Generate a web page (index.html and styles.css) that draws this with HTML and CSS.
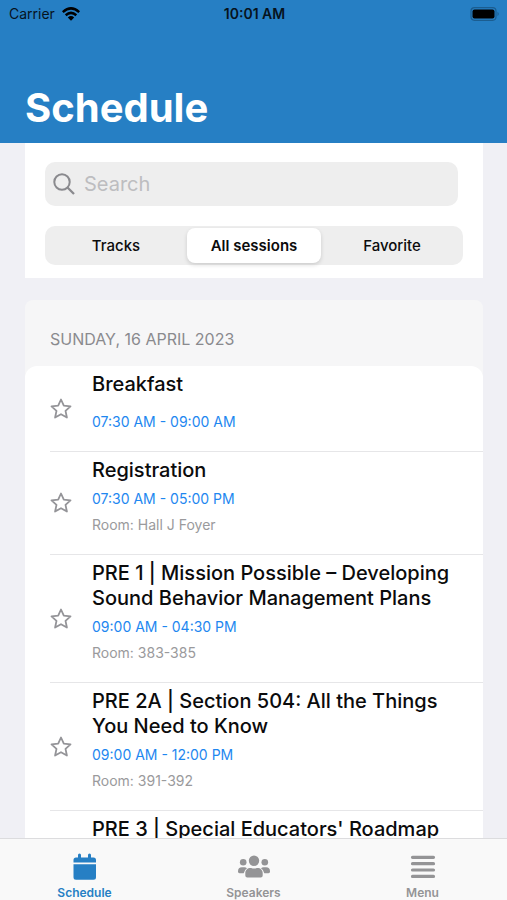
FILE: index.html
```
<!DOCTYPE html>
<html lang="en">
<head>
<meta charset="utf-8">
<meta name="viewport" content="width=device-width, initial-scale=1">
<title>Schedule</title>
<link rel="stylesheet" href="styles.css">
</head>
<body>
<svg class="sprite" aria-hidden="true">
  <symbol id="star" viewBox="0 0 22 22">
    <path d="M11 1.500l2.800 6.200 6.700.7-5 4.500 1.400 6.600L11 16.200l-5.900 3.300 1.400-6.600-5-4.500 6.700-.7z" fill="none" stroke="#949498" stroke-width="1.800" stroke-linejoin="round"/>
  </symbol>
</svg>
<div class="app">
  <header class="header">
    <div class="status">
      <div class="carrier">
        <span>Carrier</span>
        <svg class="wifi" viewBox="0 0 18 14" aria-hidden="true">
          <path d="M.8 5.100Q9-2.300 17.200 5.100M3.700 8.200Q9 3.500 14.300 8.200" fill="none" stroke="#000" stroke-width="2.500"/>
          <path d="M9 13.800L5.800 10.500Q9 7.700 12.200 10.500z" fill="#000"/>
        </svg>
      </div>
      <span class="clock">10:01 AM</span>
      <svg class="battery" viewBox="0 0 30 14" aria-hidden="true">
        <rect x="1" y=".7" width="25" height="12.600" rx="3.500" fill="none" stroke="#1b5d90" stroke-width="1.200"/>
        <rect x="2.500" y="2.400" width="22" height="9.200" rx="2" fill="#000"/>
        <path d="M27.500 4.800Q30 7 27.500 9.200z" fill="#1b5d90"/>
      </svg>
    </div>
    <h1 class="heading">Schedule</h1>
  </header>

  <main class="content">
    <section class="filters">
      <label class="search">
        <svg class="search-icon" viewBox="0 0 22 22" aria-hidden="true">
          <circle cx="9" cy="9" r="7.700" fill="none" stroke="#8a8a8e" stroke-width="2"/>
          <path d="M14.500 14.500L21 21" stroke="#8a8a8e" stroke-width="2.300"/>
        </svg>
        <input class="search-input" type="text" placeholder="Search" aria-label="Search">
      </label>
      <div class="segments">
        <button class="segment" type="button">Tracks</button>
        <button class="segment selected" type="button">All sessions</button>
        <button class="segment" type="button">Favorite</button>
      </div>
    </section>

    <section class="day">
      <h2 class="date">SUNDAY, 16 APRIL 2023</h2>
      <ul class="sessions">
        <li class="session">
          <button class="favorite" type="button" aria-label="Favorite"><svg class="star"><use href="#star"/></svg></button>
          <div class="details no-room">
            <h3 class="title">Breakfast</h3>
            <p class="time">07:30 AM - 09:00 AM</p>
          </div>
        </li>
        <li class="session">
          <button class="favorite" type="button" aria-label="Favorite"><svg class="star"><use href="#star"/></svg></button>
          <div class="details">
            <h3 class="title">Registration</h3>
            <p class="time">07:30 AM - 05:00 PM</p>
            <p class="room">Room: Hall J Foyer</p>
          </div>
        </li>
        <li class="session">
          <button class="favorite" type="button" aria-label="Favorite"><svg class="star"><use href="#star"/></svg></button>
          <div class="details">
            <h3 class="title">PRE 1 | Mission Possible – Developing Sound Behavior Management Plans</h3>
            <p class="time">09:00 AM - 04:30 PM</p>
            <p class="room">Room: 383-385</p>
          </div>
        </li>
        <li class="session">
          <button class="favorite" type="button" aria-label="Favorite"><svg class="star"><use href="#star"/></svg></button>
          <div class="details">
            <h3 class="title">PRE 2A | Section 504: All the Things You Need to Know</h3>
            <p class="time">09:00 AM - 12:00 PM</p>
            <p class="room">Room: 391-392</p>
          </div>
        </li>
        <li class="session">
          <div class="favorite"></div>
          <div class="details">
            <h3 class="title">PRE 3 | Special Educators' Roadmap</h3>
          </div>
        </li>
      </ul>
    </section>
  </main>

  <nav class="tabs">
    <a class="tab active" href="#schedule">
      <svg class="tab-icon" viewBox="0 0 32 28" aria-hidden="true">
        <path d="M4.500 9.500V7a2.500 2.500 0 0 1 2.500-2.500h2V2a1.500 1.500 0 0 1 3 0v2.500h7V2a1.500 1.500 0 0 1 3 0v2.500h2.500A2.500 2.500 0 0 1 27 7v2.500zM4.500 11.200H27v13A2.500 2.500 0 0 1 24.500 26.700H7a2.500 2.500 0 0 1-2.500-2.500z" fill="currentColor"/>
      </svg>
      <span>Schedule</span>
    </a>
    <a class="tab" href="#speakers">
      <svg class="tab-icon" viewBox="0 0 32 28" aria-hidden="true">
        <g fill="currentColor">
          <circle cx="16" cy="7.700" r="5.200"/>
          <circle cx="5.200" cy="9.200" r="3.300"/>
          <circle cx="26.800" cy="9.200" r="3.300"/>
          <path d="M7.300 22.500v-2.200c0-3.300 2.200-5.300 5.200-5.300h.7q2.800 1.100 5.600 0h.7c3 0 5.200 2 5.200 5.300v2.200q0 2-2 2H9.300q-2 0-2-2z"/>
          <path d="M0 18.200q0-4 4-4h2.400q1.500 0 2.600 1-2.700 1.700-3.300 5H1.500Q0 20.200 0 18.800zM32 18.200q0-4-4-4h-2.400q-1.500 0-2.600 1 2.700 1.700 3.300 5h4.200q1.500 0 1.500-1.400z"/>
        </g>
      </svg>
      <span>Speakers</span>
    </a>
    <a class="tab" href="#menu">
      <svg class="tab-icon" viewBox="0 0 32 28" aria-hidden="true">
        <path d="M5.500 4.300h21M5.500 10.700h21M5.500 17h21M5.500 23.400h21" stroke="currentColor" stroke-width="3.200" stroke-linecap="round"/>
      </svg>
      <span>Menu</span>
    </a>
  </nav>
</div>
</body>
</html>
```
FILE: styles.css
```
* {
  box-sizing: border-box;
}

body {
  margin: 0;
  background: #f0f0f5;
  color: #0b0b0c;
  font-family: Inter, "Liberation Sans", sans-serif;
}

h1, h2, h3, p, ul {
  margin: 0;
  padding: 0;
}

button {
  border: 0;
  padding: 0;
  background: none;
  color: inherit;
  font: inherit;
}

.sprite {
  display: none;
}

.app {
  display: flex;
  flex-direction: column;
  height: 100vh;
}

.header {
  flex: none;
  background: #267fc4;
}

.status {
  display: grid;
  grid-template-columns: 1fr auto 1fr;
  align-items: center;
  height: 27px;
  padding: 0 7px 0 9px;
  color: #06131e;
  font-size: 14px;
}

.carrier {
  display: flex;
  align-items: center;
  gap: 7px;
}

.wifi {
  width: 18px;
  height: 14px;
}

.clock {
  font-weight: 600;
}

.battery {
  justify-self: end;
  width: 30px;
  height: 14px;
}

.heading {
  padding: 56px 25px 10px;
  color: #fff;
  font-size: 40px;
  font-weight: 700;
  line-height: 50px;
}

.content {
  flex: 1;
  min-height: 0;
  overflow: hidden;
  padding: 0 24px 0 25px;
}

.filters {
  display: flex;
  flex-direction: column;
  gap: 20px;
  padding: 19px 20px 13px;
  background: #fff;
}

.search {
  display: flex;
  align-items: center;
  gap: 9px;
  height: 44px;
  margin-right: 5px;
  padding: 0 8px;
  border-radius: 10px;
  background: #eee;
}

.search-icon {
  flex: none;
  width: 22px;
  height: 22px;
}

.search-input {
  flex: 1;
  min-width: 0;
  border: 0;
  padding: 0;
  background: none;
  font-family: inherit;
  font-size: 20px;
}

.search-input::placeholder {
  color: #bdbdc0;
}

.segments {
  display: grid;
  grid-template-columns: repeat(3, 1fr);
  height: 39px;
  padding: 2px;
  border-radius: 10px;
  background: #eee;
}

.segment {
  border-radius: 8px;
  font-size: 15px;
  font-weight: 500;
}

.selected {
  margin: 0 2px;
  background: #fff;
  box-shadow: 0 2px 4px rgba(0, 0, 0, 0.14);
  font-weight: 600;
}

.day {
  margin-top: 22px;
  border-radius: 8px 8px 0 0;
  background: #f6f6f7;
}

.date {
  padding: 27px 25px 15px;
  color: #8a8a8e;
  font-size: 16px;
  font-weight: 400;
  line-height: 24px;
}

.sessions {
  border-radius: 12px 12px 0 0;
  background: #fff;
  list-style: none;
}

.session {
  display: flex;
  align-items: stretch;
  margin-left: 25px;
  border-bottom: 1px solid #e6e6e8;
}

.favorite {
  display: flex;
  flex: none;
  align-items: center;
  width: 42px;
}

.star {
  width: 22px;
  height: 22px;
}

.details {
  flex: 1;
  padding: 6px 20px 16px 0;
}

.title {
  margin-bottom: 3px;
  font-size: 20px;
  font-weight: 500;
  line-height: 25px;
}

.no-room .title {
  margin-bottom: 12px;
}

.time,
.room {
  font-size: 14px;
  line-height: 26px;
}

.time {
  color: #1e87f0;
}

.room {
  color: #9a9a9c;
}

.tabs {
  display: grid;
  flex: none;
  grid-template-columns: repeat(3, 1fr);
  height: 62px;
  padding-top: 14px;
  border-top: 1px solid #dcdcde;
  background: #f9f9f9;
}

.tab {
  display: flex;
  flex-direction: column;
  align-items: center;
  gap: 4px;
  color: #949496;
  font-size: 12px;
  font-weight: 600;
  line-height: 16px;
  text-decoration: none;
}

.active {
  color: #267fc4;
}

.tab-icon {
  width: 32px;
  height: 28px;
}
```
